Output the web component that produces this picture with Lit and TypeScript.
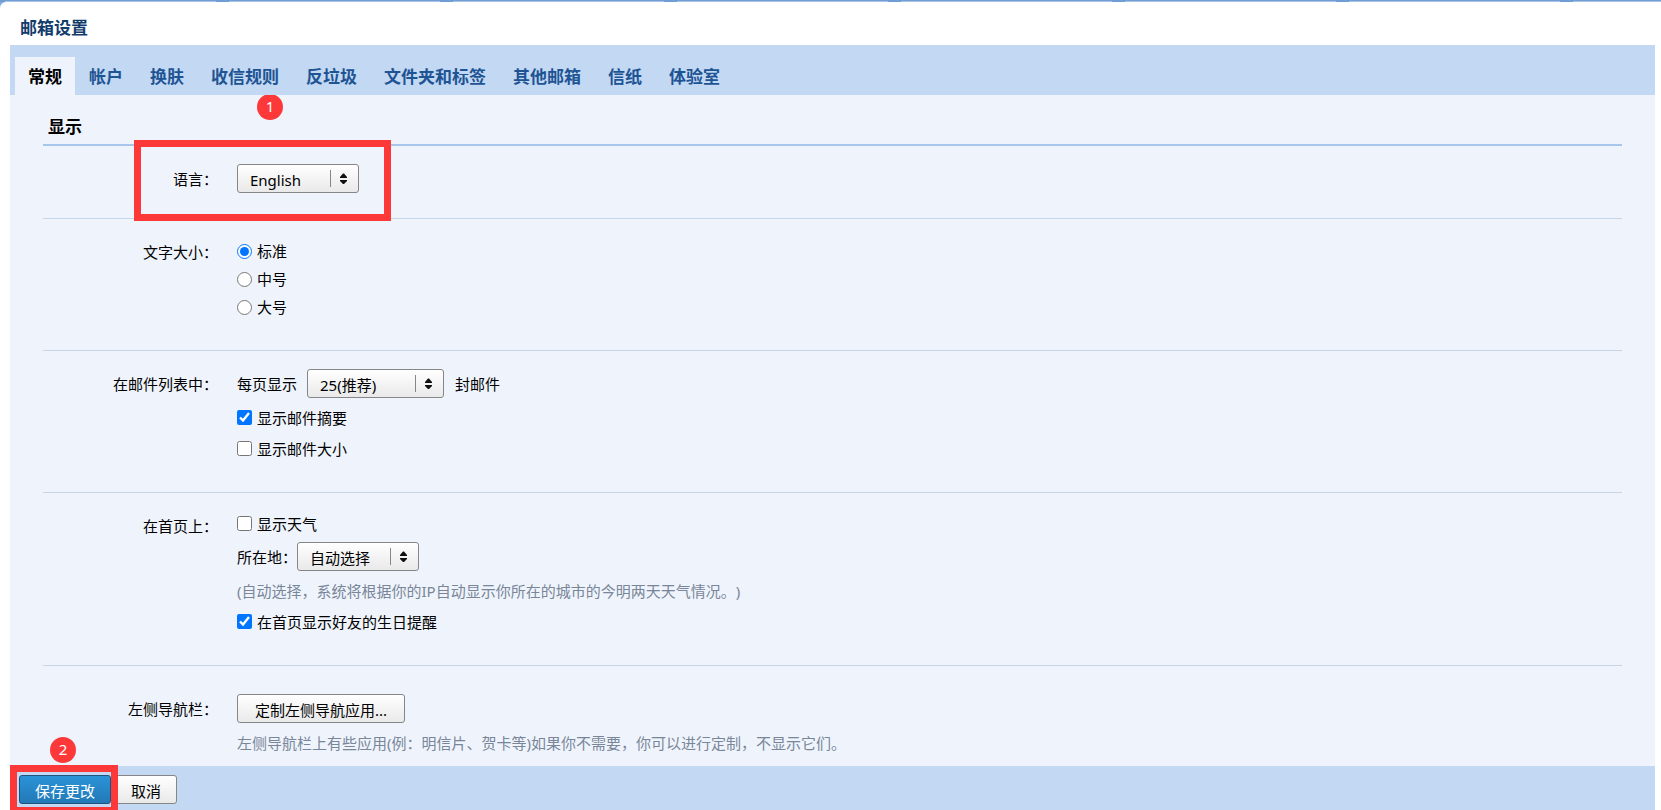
import { LitElement, html, css } from "lit";
import { customElement, property, state } from "lit/decorators.js";
import { classMap } from "lit/directives/class-map.js";

@customElement("pick-list")
class PickList extends LitElement {
  @property({ type: Array }) options: string[] = [];
  @property() label = "";

  static styles = css`
    :host {
      display: inline-grid;
      width: 122px;
      height: 29px;
    }
    .control,
    .arrows {
      grid-area: 1 / 1;
    }
    .control {
      appearance: none;
      box-sizing: border-box;
      width: 100%;
      height: 29px;
      margin: 0;
      padding: 3px 30px 0 12px;
      border: 1px solid #868686;
      border-radius: 3px;
      background: linear-gradient(#ffffff, #e9e9e9);
      color: #000;
      font: inherit;
      line-height: 20px;
    }
    .arrows {
      justify-self: end;
      pointer-events: none;
    }
  `;

  render() {
    return html`
      <select class="control" aria-label=${this.label}>
        ${this.options.map((o) => html`<option>${o}</option>`)}
      </select>
      <svg class="arrows" width="29" height="29" viewBox="0 0 29 29" aria-hidden="true">
        <path d="M.5 6v17" stroke="#868686" />
        <path d="M13 9.500h1L17 13v1H10v-1zM10 16h7v1l-3 3h-1l-3-3z" fill="#111" />
      </svg>
    `;
  }
}

@customElement("app-root")
class AppRoot extends LitElement {
  @state() private active = 0;

  private tabs = ["常规", "帐户", "换肤", "收信规则", "反垃圾", "文件夹和标签", "其他邮箱", "信纸", "体验室"];
  private sizes = ["标准", "中号", "大号"];

  static styles = css`
    :host {
      display: flex;
      flex-direction: column;
      height: 100vh;
      overflow: hidden;
      background: #83ade0;
      color: #000;
      font: 15px/20px "Noto Sans", "Noto Sans CJK SC", sans-serif;
      text-spacing-trim: space-all;
    }
    .strip {
      flex: none;
      height: 2px;
      border-top: 1px solid #6f9dd4;
      box-sizing: border-box;
      background: repeating-linear-gradient(90deg, #6f9dd4 0 5px, #a9c4e9 5px 216px, #6f9dd4 216px 224px);
    }
    .window {
      flex: 1;
      min-height: 0;
      display: flex;
      flex-direction: column;
      padding: 0 6px 0 10px;
      border-top-left-radius: 6px;
      background: #fff;
    }
    .title {
      margin: 0;
      padding: 14px 10px 5px;
      color: #123c6c;
      font-size: 17px;
      line-height: 24px;
    }
    .tabs {
      flex: none;
      display: flex;
      gap: 1px;
      padding: 12px 5px 0;
      background: #c2d8f3;
    }
    .tab {
      height: 38px;
      padding: 2px 13px 0;
      border: 0;
      background: none;
      color: #1e5494;
      font: bold 17px/24px "Noto Sans", "Noto Sans CJK SC", sans-serif;
    }
    .tab.active {
      background: #eff4fc;
      color: #000;
    }
    .content {
      flex: 1;
      min-height: 0;
      overflow: auto;
      padding: 0 33px;
      background: #eff4fc;
    }
    .heading {
      margin: 0;
      padding: 20px 5px 5px;
      border-bottom: 2px solid #a8c6eb;
      font-size: 17px;
      line-height: 24px;
    }
    .row {
      position: relative;
      display: grid;
      grid-template-columns: 175px 1fr;
      column-gap: 19px;
      padding: 18px 0 28px;
      border-bottom: 1px solid #c5d6e8;
    }
    .row.language {
      padding-bottom: 25px;
    }
    .row.text-size {
      padding-bottom: 29px;
    }
    .row.navigation {
      padding: 28px 0 0;
      border-bottom: 0;
    }
    .name {
      padding-top: 5px;
      text-align: right;
    }
    .fields {
      display: flex;
      flex-direction: column;
      align-items: flex-start;
    }
    .line {
      display: flex;
      align-items: center;
      height: 31px;
      margin: 0;
    }
    .line.radio {
      height: 28px;
    }
    .line.first {
      height: 25px;
      margin-bottom: 6px;
    }
    .line.control {
      height: 29px;
      margin-bottom: 4px;
    }
    .box {
      width: 15px;
      height: 15px;
      margin: 0 5px 0 0;
    }
    .hint {
      color: #798699;
    }
    .wide {
      width: 137px;
      margin: 0 11px 0 10px;
    }
    .button {
      height: 29px;
      padding: 3px 15px 0;
      border: 1px solid #868686;
      border-radius: 3px;
      background: linear-gradient(#ffffff, #e9e9e9);
      color: #000;
      font: inherit;
    }
    .button.large {
      min-width: 168px;
    }
    .button.primary {
      border-color: #1c5380;
      background: linear-gradient(#2a93d8, #2379b6);
      color: #fff;
    }
    .footer {
      position: relative;
      flex: none;
      display: flex;
      gap: 4px;
      height: 35px;
      padding: 9px 9px 0;
      background: #c2d8f3;
    }
    .frame {
      position: absolute;
      box-sizing: border-box;
      border: 7px solid #fd3838;
      pointer-events: none;
    }
    .frame.one {
      left: 91px;
      top: -6px;
      width: 257px;
      height: 81px;
    }
    .frame.two {
      left: 0;
      top: -1px;
      width: 108px;
      height: 49px;
    }
    .badge {
      position: absolute;
      width: 26px;
      height: 26px;
      border-radius: 50%;
      background: #fd3838;
      color: #fff;
      line-height: 24px;
      text-align: center;
    }
    .badge.one {
      left: 214px;
      top: -52px;
    }
    .badge.two {
      left: 40px;
      top: -29px;
    }
  `;

  private check(text: string, checked: boolean, first = false) {
    return html`<label class=${classMap({ line: true, first })}>
      <input class="box" type="checkbox" ?checked=${checked} />${text}
    </label>`;
  }

  render() {
    return html`
      <div class="strip"></div>
      <div class="window">
        <h1 class="title">邮箱设置</h1>
        <nav class="tabs" role="tablist">
          ${this.tabs.map(
            (t, i) => html`<button
              class=${classMap({ tab: true, active: i === this.active })}
              role="tab"
              aria-selected=${i === this.active}
              @click=${() => (this.active = i)}
            >${t}</button>`
          )}
        </nav>
        <main class="content">
          <h2 class="heading">显示</h2>
          <section class="row language">
            <span class="name">语言：</span>
            <div class="fields">
              <pick-list label="语言" .options=${["English"]}></pick-list>
            </div>
            <div class="frame one"></div>
            <div class="badge one">1</div>
          </section>
          <section class="row text-size">
            <span class="name">文字大小：</span>
            <div class="fields" role="radiogroup" aria-label="文字大小">
              ${this.sizes.map(
                (s, i) => html`<label class="line radio">
                  <input class="box" type="radio" name="size" ?checked=${i === 0} />${s}
                </label>`
              )}
            </div>
          </section>
          <section class="row">
            <span class="name">在邮件列表中：</span>
            <div class="fields">
              <div class="line control">
                <span>每页显示</span>
                <pick-list class="wide" label="每页显示" .options=${["25(推荐)"]}></pick-list>
                <span>封邮件</span>
              </div>
              ${this.check("显示邮件摘要", true)} ${this.check("显示邮件大小", false)}
            </div>
          </section>
          <section class="row">
            <span class="name">在首页上：</span>
            <div class="fields">
              ${this.check("显示天气", false, true)}
              <div class="line control">
                <span>所在地：</span>
                <pick-list label="所在地" .options=${["自动选择"]}></pick-list>
              </div>
              <p class="line hint">(自动选择，系统将根据你的IP自动显示你所在的城市的今明两天天气情况。)</p>
              ${this.check("在首页显示好友的生日提醒", true)}
            </div>
          </section>
          <section class="row navigation">
            <span class="name">左侧导航栏：</span>
            <div class="fields">
              <div class="line control"><button class="button large">定制左侧导航应用...</button></div>
              <p class="line hint">左侧导航栏上有些应用(例：明信片、贺卡等)如果你不需要，你可以进行定制，不显示它们。</p>
            </div>
          </section>
        </main>
        <footer class="footer">
          <button class="button primary">保存更改</button>
          <button class="button">取消</button>
          <div class="frame two"></div>
          <div class="badge two">2</div>
        </footer>
      </div>
    `;
  }
}
